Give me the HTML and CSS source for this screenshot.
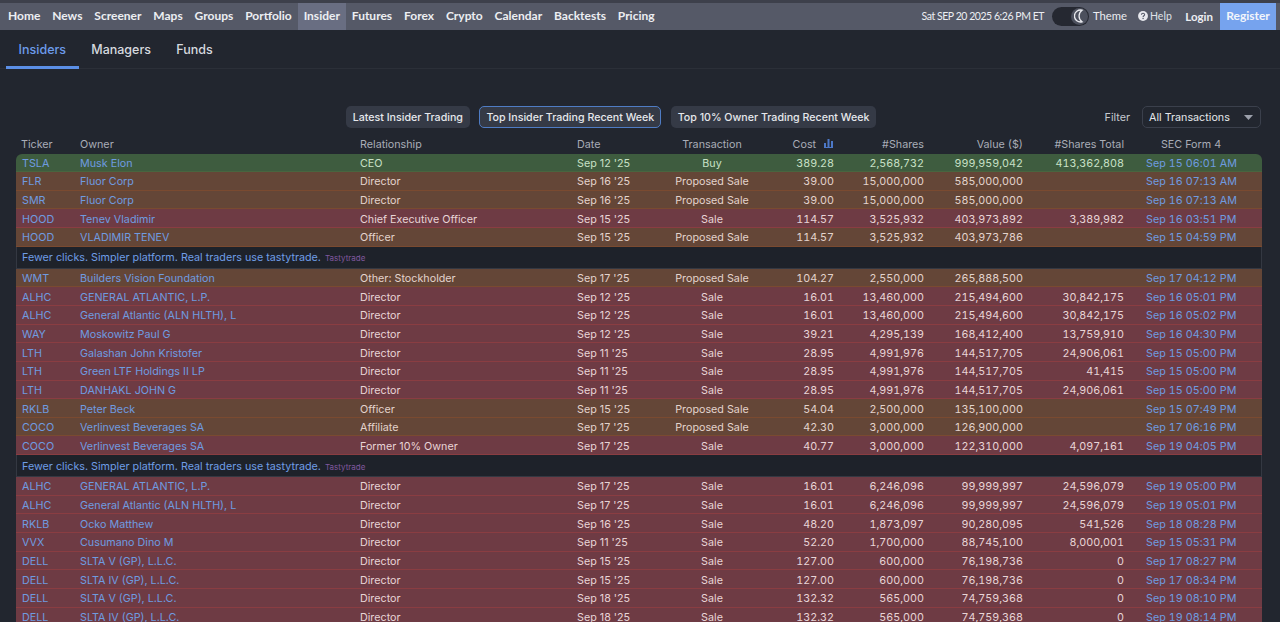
FILE: index.html
```html
<!DOCTYPE html>
<html lang="en">
<head>
<meta charset="utf-8">
<title>Insider Trading</title>
<link rel="stylesheet" href="styles.css">
</head>
<body>
<nav class="nav">
  <div class="nav-links">
    <a class="nav-link">Home</a><a class="nav-link">News</a><a class="nav-link">Screener</a><a class="nav-link">Maps</a><a class="nav-link">Groups</a><a class="nav-link">Portfolio</a><a class="nav-link active">Insider</a><a class="nav-link">Futures</a><a class="nav-link">Forex</a><a class="nav-link">Crypto</a><a class="nav-link">Calendar</a><a class="nav-link">Backtests</a><a class="nav-link">Pricing</a>
  </div>
  <div class="nav-right">
    <span class="clock">Sat SEP 20 2025 6:26 PM ET</span>
    <span class="toggle"><span class="knob"><svg width="12" height="14" viewBox="0 0 12 14"><path d="M8 1.2A6 6 0 1 0 8 12.8 7.2 7.2 0 0 1 8 1.2Z" fill="none" stroke="#e8e9ee" stroke-width="1.3"/></svg></span></span>
    <span class="theme">Theme</span>
    <span class="help"><svg width="10" height="10" viewBox="0 0 11 11"><circle cx="5.5" cy="5.5" r="5.4" fill="#e8e9ee"/><path d="M3.8 4.2c0-2.2 3.5-2.2 3.5-.2 0 1.2-1.7 1.2-1.7 2.5" fill="none" stroke="#555968" stroke-width="1.2"/><rect x="4.9" y="7.5" width="1.4" height="1.4" fill="#555968"/></svg>Help</span>
    <a class="login">Login</a>
    <a class="register">Register</a>
  </div>
</nav>
<div class="tabs">
  <a class="tab current">Insiders</a><a class="tab">Managers</a><a class="tab">Funds</a>
</div>
<div class="toolbar">
  <div class="pills">
    <button class="pill">Latest Insider Trading</button>
    <button class="pill selected">Top Insider Trading Recent Week</button>
    <button class="pill">Top 10% Owner Trading Recent Week</button>
  </div>
  <div class="filter">
    <span class="filter-label">Filter</span>
    <span class="select">All Transactions<svg width="9" height="5" viewBox="0 0 9 5"><path d="M0 0h9L4.5 5Z" fill="#9ca0ab"/></svg></span>
  </div>
</div>
<div class="table-wrap">
<table class="grid">
  <colgroup><col class="c1"><col class="c2"><col class="c3"><col class="c4"><col class="c5"><col class="c6"><col class="c7"><col class="c8"><col class="c9"><col class="c10"></colgroup>
  <thead>
    <tr><th>Ticker</th><th>Owner</th><th>Relationship</th><th>Date</th><th class="mid">Transaction</th><th class="num">Cost <svg class="bars" width="9" height="9" viewBox="0 0 9 9"><path d="M0 4h2v4H0zM3.5 0h2v8h-2zM7 2h2v6H7zM0 8h9v1H0z" fill="#4c78c8"/></svg></th><th class="num">#Shares</th><th class="num">Value ($)</th><th class="num">#Shares Total</th><th class="sec">SEC Form 4</th></tr>
  </thead>
  <tbody>
    <tr class="buy first"><td><a>TSLA</a></td><td><a>Musk Elon</a></td><td>CEO</td><td>Sep 12 '25</td><td class="mid">Buy</td><td class="num">389.28</td><td class="num">2,568,732</td><td class="num">999,959,042</td><td class="num">413,362,808</td><td class="sec"><a>Sep 15 06:01 AM</a></td></tr>
    <tr class="prop"><td><a>FLR</a></td><td><a>Fluor Corp</a></td><td>Director</td><td>Sep 16 '25</td><td class="mid">Proposed Sale</td><td class="num">39.00</td><td class="num">15,000,000</td><td class="num">585,000,000</td><td class="num"></td><td class="sec"><a>Sep 16 07:13 AM</a></td></tr>
    <tr class="prop"><td><a>SMR</a></td><td><a>Fluor Corp</a></td><td>Director</td><td>Sep 16 '25</td><td class="mid">Proposed Sale</td><td class="num">39.00</td><td class="num">15,000,000</td><td class="num">585,000,000</td><td class="num"></td><td class="sec"><a>Sep 16 07:13 AM</a></td></tr>
    <tr class="sale"><td><a>HOOD</a></td><td><a>Tenev Vladimir</a></td><td>Chief Executive Officer</td><td>Sep 15 '25</td><td class="mid">Sale</td><td class="num">114.57</td><td class="num">3,525,932</td><td class="num">403,973,892</td><td class="num">3,389,982</td><td class="sec"><a>Sep 16 03:51 PM</a></td></tr>
    <tr class="prop"><td><a>HOOD</a></td><td><a>VLADIMIR TENEV</a></td><td>Officer</td><td>Sep 15 '25</td><td class="mid">Proposed Sale</td><td class="num">114.57</td><td class="num">3,525,932</td><td class="num">403,973,786</td><td class="num"></td><td class="sec"><a>Sep 15 04:59 PM</a></td></tr>
    <tr class="ad"><td colspan="10"><a>Fewer clicks. Simpler platform. Real traders use tastytrade.</a> <span class="sponsor">Tastytrade</span></td></tr>
    <tr class="prop"><td><a>WMT</a></td><td><a>Builders Vision Foundation</a></td><td>Other: Stockholder</td><td>Sep 17 '25</td><td class="mid">Proposed Sale</td><td class="num">104.27</td><td class="num">2,550,000</td><td class="num">265,888,500</td><td class="num"></td><td class="sec"><a>Sep 17 04:12 PM</a></td></tr>
    <tr class="sale"><td><a>ALHC</a></td><td><a>GENERAL ATLANTIC, L.P.</a></td><td>Director</td><td>Sep 12 '25</td><td class="mid">Sale</td><td class="num">16.01</td><td class="num">13,460,000</td><td class="num">215,494,600</td><td class="num">30,842,175</td><td class="sec"><a>Sep 16 05:01 PM</a></td></tr>
    <tr class="sale"><td><a>ALHC</a></td><td><a>General Atlantic (ALN HLTH), L</a></td><td>Director</td><td>Sep 12 '25</td><td class="mid">Sale</td><td class="num">16.01</td><td class="num">13,460,000</td><td class="num">215,494,600</td><td class="num">30,842,175</td><td class="sec"><a>Sep 16 05:02 PM</a></td></tr>
    <tr class="sale"><td><a>WAY</a></td><td><a>Moskowitz Paul G</a></td><td>Director</td><td>Sep 12 '25</td><td class="mid">Sale</td><td class="num">39.21</td><td class="num">4,295,139</td><td class="num">168,412,400</td><td class="num">13,759,910</td><td class="sec"><a>Sep 16 04:30 PM</a></td></tr>
    <tr class="sale"><td><a>LTH</a></td><td><a>Galashan John Kristofer</a></td><td>Director</td><td>Sep 11 '25</td><td class="mid">Sale</td><td class="num">28.95</td><td class="num">4,991,976</td><td class="num">144,517,705</td><td class="num">24,906,061</td><td class="sec"><a>Sep 15 05:00 PM</a></td></tr>
    <tr class="sale"><td><a>LTH</a></td><td><a>Green LTF Holdings II LP</a></td><td>Director</td><td>Sep 11 '25</td><td class="mid">Sale</td><td class="num">28.95</td><td class="num">4,991,976</td><td class="num">144,517,705</td><td class="num">41,415</td><td class="sec"><a>Sep 15 05:00 PM</a></td></tr>
    <tr class="sale"><td><a>LTH</a></td><td><a>DANHAKL JOHN G</a></td><td>Director</td><td>Sep 11 '25</td><td class="mid">Sale</td><td class="num">28.95</td><td class="num">4,991,976</td><td class="num">144,517,705</td><td class="num">24,906,061</td><td class="sec"><a>Sep 15 05:00 PM</a></td></tr>
    <tr class="prop"><td><a>RKLB</a></td><td><a>Peter Beck</a></td><td>Officer</td><td>Sep 15 '25</td><td class="mid">Proposed Sale</td><td class="num">54.04</td><td class="num">2,500,000</td><td class="num">135,100,000</td><td class="num"></td><td class="sec"><a>Sep 15 07:49 PM</a></td></tr>
    <tr class="prop"><td><a>COCO</a></td><td><a>Verlinvest Beverages SA</a></td><td>Affiliate</td><td>Sep 17 '25</td><td class="mid">Proposed Sale</td><td class="num">42.30</td><td class="num">3,000,000</td><td class="num">126,900,000</td><td class="num"></td><td class="sec"><a>Sep 17 06:16 PM</a></td></tr>
    <tr class="sale"><td><a>COCO</a></td><td><a>Verlinvest Beverages SA</a></td><td>Former 10% Owner</td><td>Sep 17 '25</td><td class="mid">Sale</td><td class="num">40.77</td><td class="num">3,000,000</td><td class="num">122,310,000</td><td class="num">4,097,161</td><td class="sec"><a>Sep 19 04:05 PM</a></td></tr>
    <tr class="ad"><td colspan="10"><a>Fewer clicks. Simpler platform. Real traders use tastytrade.</a> <span class="sponsor">Tastytrade</span></td></tr>
    <tr class="sale"><td><a>ALHC</a></td><td><a>GENERAL ATLANTIC, L.P.</a></td><td>Director</td><td>Sep 17 '25</td><td class="mid">Sale</td><td class="num">16.01</td><td class="num">6,246,096</td><td class="num">99,999,997</td><td class="num">24,596,079</td><td class="sec"><a>Sep 19 05:00 PM</a></td></tr>
    <tr class="sale"><td><a>ALHC</a></td><td><a>General Atlantic (ALN HLTH), L</a></td><td>Director</td><td>Sep 17 '25</td><td class="mid">Sale</td><td class="num">16.01</td><td class="num">6,246,096</td><td class="num">99,999,997</td><td class="num">24,596,079</td><td class="sec"><a>Sep 19 05:01 PM</a></td></tr>
    <tr class="sale"><td><a>RKLB</a></td><td><a>Ocko Matthew</a></td><td>Director</td><td>Sep 16 '25</td><td class="mid">Sale</td><td class="num">48.20</td><td class="num">1,873,097</td><td class="num">90,280,095</td><td class="num">541,526</td><td class="sec"><a>Sep 18 08:28 PM</a></td></tr>
    <tr class="sale"><td><a>VVX</a></td><td><a>Cusumano Dino M</a></td><td>Director</td><td>Sep 11 '25</td><td class="mid">Sale</td><td class="num">52.20</td><td class="num">1,700,000</td><td class="num">88,745,100</td><td class="num">8,000,001</td><td class="sec"><a>Sep 15 05:31 PM</a></td></tr>
    <tr class="sale"><td><a>DELL</a></td><td><a>SLTA V (GP), L.L.C.</a></td><td>Director</td><td>Sep 15 '25</td><td class="mid">Sale</td><td class="num">127.00</td><td class="num">600,000</td><td class="num">76,198,736</td><td class="num">0</td><td class="sec"><a>Sep 17 08:27 PM</a></td></tr>
    <tr class="sale"><td><a>DELL</a></td><td><a>SLTA IV (GP), L.L.C.</a></td><td>Director</td><td>Sep 15 '25</td><td class="mid">Sale</td><td class="num">127.00</td><td class="num">600,000</td><td class="num">76,198,736</td><td class="num">0</td><td class="sec"><a>Sep 17 08:34 PM</a></td></tr>
    <tr class="sale"><td><a>DELL</a></td><td><a>SLTA V (GP), L.L.C.</a></td><td>Director</td><td>Sep 18 '25</td><td class="mid">Sale</td><td class="num">132.32</td><td class="num">565,000</td><td class="num">74,759,368</td><td class="num">0</td><td class="sec"><a>Sep 19 08:10 PM</a></td></tr>
    <tr class="sale"><td><a>DELL</a></td><td><a>SLTA IV (GP), L.L.C.</a></td><td>Director</td><td>Sep 18 '25</td><td class="mid">Sale</td><td class="num">132.32</td><td class="num">565,000</td><td class="num">74,759,368</td><td class="num">0</td><td class="sec"><a>Sep 19 08:14 PM</a></td></tr>
  </tbody>
</table>
</div>
</body>
</html>
```
FILE: styles.css
```css
* { box-sizing: border-box; }
html, body { margin: 0; height: 100%; overflow: hidden; }
body { background: #22262f; color: #d3d6dd; font-family: Inter, "Liberation Sans", sans-serif; font-size: 10.75px; border-top: 3px solid #3d404b; }
a { color: inherit; text-decoration: none; }

.nav { display: flex; justify-content: space-between; height: 26.5px; background: #555967; font-family: Lato, "Liberation Sans", sans-serif; font-weight: 700; font-size: 12px; color: #eceef2; }
.nav-links, .nav-right { display: flex; align-items: center; height: 100%; }
.nav-links { padding-left: 2px; }
.nav-link { display: flex; align-items: center; height: 100%; padding: 0 5.95px 1px; }
.nav-link.active { background: #696e82; }
.nav-right { font-weight: 400; font-size: 10.5px; }
.clock { margin-right: 8px; letter-spacing: -0.45px; }
.toggle { display: flex; justify-content: flex-end; width: 37px; height: 19px; border-radius: 10px; background: #252831; padding: 1px; margin-right: 4px; }
.knob { display: flex; align-items: center; justify-content: center; width: 17px; height: 17px; border-radius: 50%; background: #4c505d; }
.theme { font-size: 11.25px; margin: -2px 11px 0 0; }
.help { display: flex; align-items: center; gap: 2px; font-size: 10.5px; margin-right: 13.5px; color: #dfe1e7; }
.login { font-weight: 700; font-size: 11.5px; margin-right: 7px; }
.register { display: flex; align-items: center; justify-content: center; width: 56px; height: 100%; margin-right: 4px; padding-bottom: 1px; background: #76a3ee; font-weight: 700; font-size: 12px; color: #f2f5fb; }

.tabs { display: flex; height: 39px; padding-left: 6px; border-bottom: 1px solid #2b2f38; font-size: 12.5px; font-weight: 500; }
.tab { display: flex; align-items: center; height: 39px; padding: 1px 12.6px 0; color: #d6d9df; }
.tab.current { color: #6d9ceb; border-bottom: 3px solid #5b8fe6; padding-top: 4px; }

.toolbar { position: relative; display: flex; justify-content: center; margin-top: 37px; height: 22px; padding-right: 58px; }
.pills { display: flex; gap: 9.5px; }
.pill { height: 22px; padding: 1px 6px 0; border: 1px solid transparent; border-radius: 5px; background: #353a46; color: #e6e8ec; font: 500 10.65px Inter, "Liberation Sans", sans-serif; }
.pill.selected { border-color: #4f7cc4; }
.filter { position: absolute; right: 19px; top: 0; display: flex; align-items: center; gap: 12px; padding-top: 0; }
.filter-label { color: #c6c9d0; padding-top: 1px; }
.select { display: flex; align-items: center; justify-content: space-between; width: 119px; height: 22px; padding: 1px 7px 0 6px; border: 1px solid #3b404c; border-radius: 5px; color: #e4e6ea; }

.table-wrap { padding: 7px 18px 0 16px; }
.grid { width: 1246px; border-collapse: separate; border-spacing: 0; table-layout: fixed; }
.c1 { width: 58px; } .c2 { width: 280px; } .c3 { width: 217px; } .c4 { width: 89px; } .c5 { width: 104px; }
.c6 { width: 76px; } .c7 { width: 90px; } .c8 { width: 99px; } .c9 { width: 101px; } .c10 { width: 132px; }
th, td { padding: 0 6px; white-space: nowrap; overflow: hidden; text-align: left; }
th { height: 19px; font-weight: 400; color: #a9adb7; }
th:first-child { padding-left: 5px; }
td { height: 18.67px; line-height: 15px; padding-top: 2px; border-bottom: 1px solid; }
.mid { text-align: center; }
th.num, td.num { text-align: right; font-variant-numeric: tabular-nums; }
.sec, th.sec { padding-left: 16px; padding-right: 26px; text-align: center; }
td.sec a { font-variant-numeric: tabular-nums; letter-spacing: 0.05px; }
.bars { margin-left: 5px; margin-right: 1px; vertical-align: 0; }
td a { color: #6f9be0; }

.buy td { background: #3e5c3f; border-color: #48653f; color: #c8e0c6; }
.prop td { background: #644637; border-color: #7a4a30; color: #e3d3cc; }
.sale td { background: #6e3b44; border-color: #8a3d42; color: #e8d4d6; }
.first td:first-child { border-top-left-radius: 6px; }
.first td:last-child { border-top-right-radius: 6px; }
.ad td { height: 21.8px; padding-left: 5px; background: #1e222a; border: 1px solid #343842; border-width: 0 1px 1px; }
.ad td a { color: #6f9de6; }
.sponsor { font-size: 8px; color: #80589f; margin-left: 1px; }
```
